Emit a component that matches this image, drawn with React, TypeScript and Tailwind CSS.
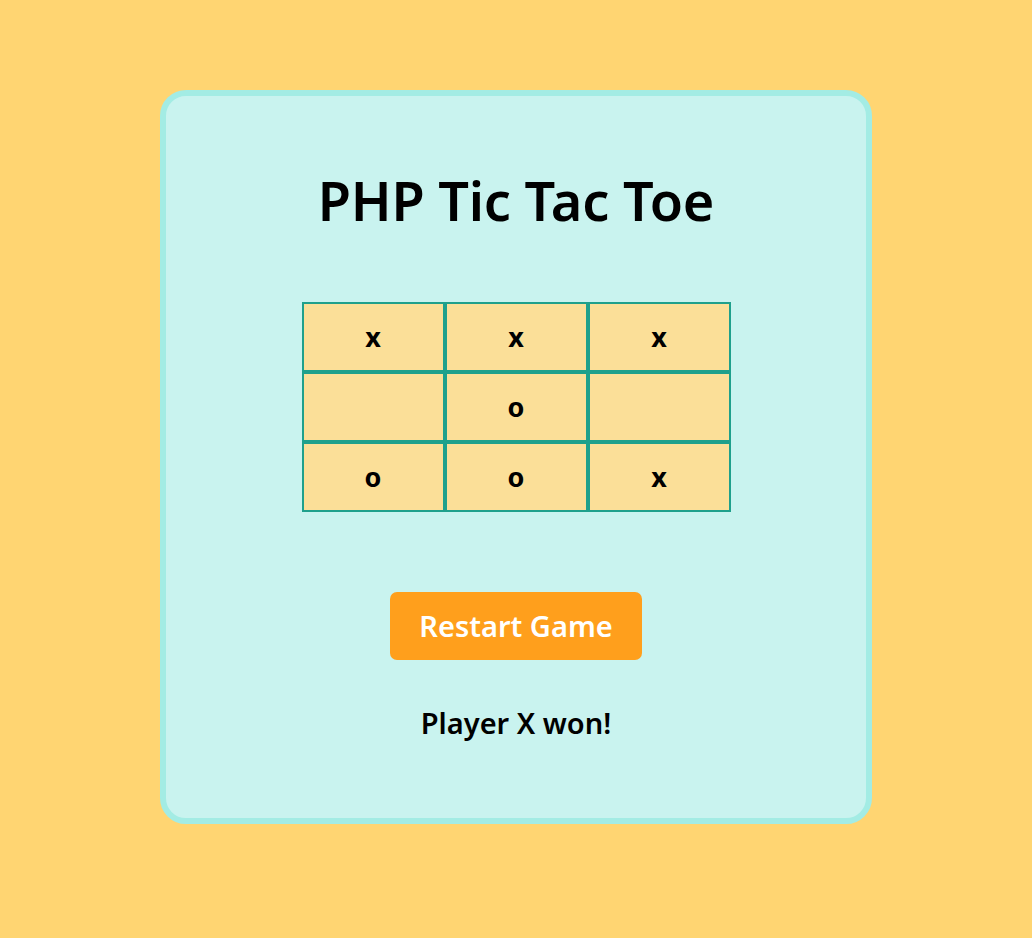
const board = [
  ["x", "x", "x"],
  ["", "o", ""],
  ["o", "o", "x"],
];

export default function App() {
  return (
    <div
      className="min-h-screen w-full bg-[#ffd572] pt-[90px]"
      style={{ fontFamily: '"Noto Sans", "Open Sans", sans-serif' }}
    >
      <div className="mx-auto flex h-[734px] w-[712px] flex-col items-center rounded-[26px] border-[6px] border-[#a3ece4] bg-[#c9f3ef]">
        <h1 className="mt-[74px] text-[54px] font-semibold leading-[60px] tracking-[-0.2px] text-black">
          PHP Tic Tac Toe
        </h1>
        <div className="mt-[72px] grid grid-cols-3">
          {board.flat().map((cell, i) => (
            <div
              key={i}
              className="flex h-[70px] w-[143px] items-center justify-center border-2 border-[#1fa08c] bg-[#fbdf98] text-[27px] font-bold text-black"
            >
              {cell}
            </div>
          ))}
        </div>
        <button className="mt-[80px] h-[68px] w-[252px] rounded-[7px] bg-[#ff9f1c] text-[29px] font-semibold text-white">
          Restart Game
        </button>
        <p className="mt-[41px] text-[29px] font-semibold text-black">Player X won!</p>
      </div>
    </div>
  );
}
